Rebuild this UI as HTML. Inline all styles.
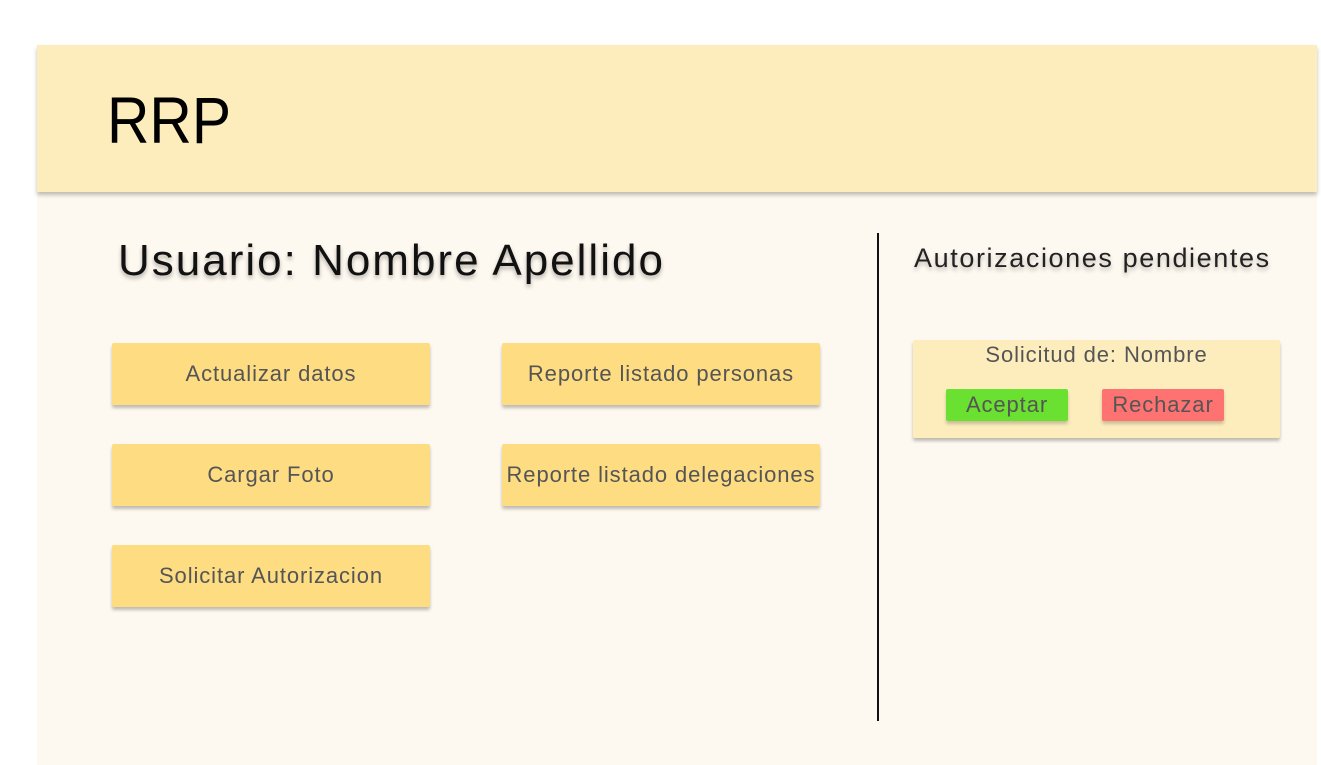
<!DOCTYPE html>
<html><head><meta charset="utf-8"><style>
body{margin:0;background:#fff;width:1321px;height:765px;position:relative;overflow:hidden;font-family:"Liberation Sans","DejaVu Sans",sans-serif}
.main{position:absolute;left:37px;top:45px;width:1280px;height:720px;background:#fef9f0}
.hdr{position:absolute;left:37px;top:45px;width:1280px;height:147px;background:#fdedbd;box-shadow:0 3px 4px rgba(0,0,0,.25)}
.logo{position:absolute;left:107px;top:82px;font-size:66px;color:#000;transform:scaleX(0.89);transform-origin:left}
.title{position:absolute;left:118px;top:236px;font-size:44px;color:#111;letter-spacing:2px;text-shadow:0 3px 4px rgba(0,0,0,.3)}
.btn{position:absolute;width:318px;height:62px;background:#fddc82;box-shadow:0 3px 3px rgba(0,0,0,.25);color:#555;font-size:22px;letter-spacing:0.9px;display:flex;align-items:center;justify-content:center;border-radius:2px;white-space:nowrap}
.vline{position:absolute;left:877px;top:233px;width:2px;height:488px;background:#111}
.auth{position:absolute;left:914px;top:243px;font-size:27px;letter-spacing:1.6px;color:#222;text-shadow:0 3px 4px rgba(0,0,0,.25)}
.card{position:absolute;left:913px;top:340px;width:367px;height:98px;background:#fdedbd;box-shadow:0 3px 3px rgba(0,0,0,.25);border-radius:2px}
.sol{position:absolute;left:0;width:100%;top:2px;text-align:center;font-size:22px;letter-spacing:0.9px;color:#555}
.b2{position:absolute;top:49px;width:122px;height:32px;font-size:22px;letter-spacing:0.9px;color:#555;display:flex;align-items:center;justify-content:center;border-radius:2px;box-shadow:0 3px 3px rgba(0,0,0,.2)}
</style></head><body>
<div class="main"></div>
<div class="hdr"></div>
<div class="logo">RRP</div>
<div class="title">Usuario: Nombre Apellido</div>
<div class="btn" style="left:112px;top:343px">Actualizar datos</div>
<div class="btn" style="left:112px;top:444px">Cargar Foto</div>
<div class="btn" style="left:112px;top:545px">Solicitar Autorizacion</div>
<div class="btn" style="left:502px;top:343px">Reporte listado personas</div>
<div class="btn" style="left:502px;top:444px">Reporte listado delegaciones</div>
<div class="vline"></div>
<div class="auth">Autorizaciones pendientes</div>
<div class="card">
<div class="sol">Solicitud de: Nombre</div>
<div class="b2" style="left:33px;background:#6ae031">Aceptar</div>
<div class="b2" style="left:189px;background:#fe7272">Rechazar</div>
</div>
</body></html>
